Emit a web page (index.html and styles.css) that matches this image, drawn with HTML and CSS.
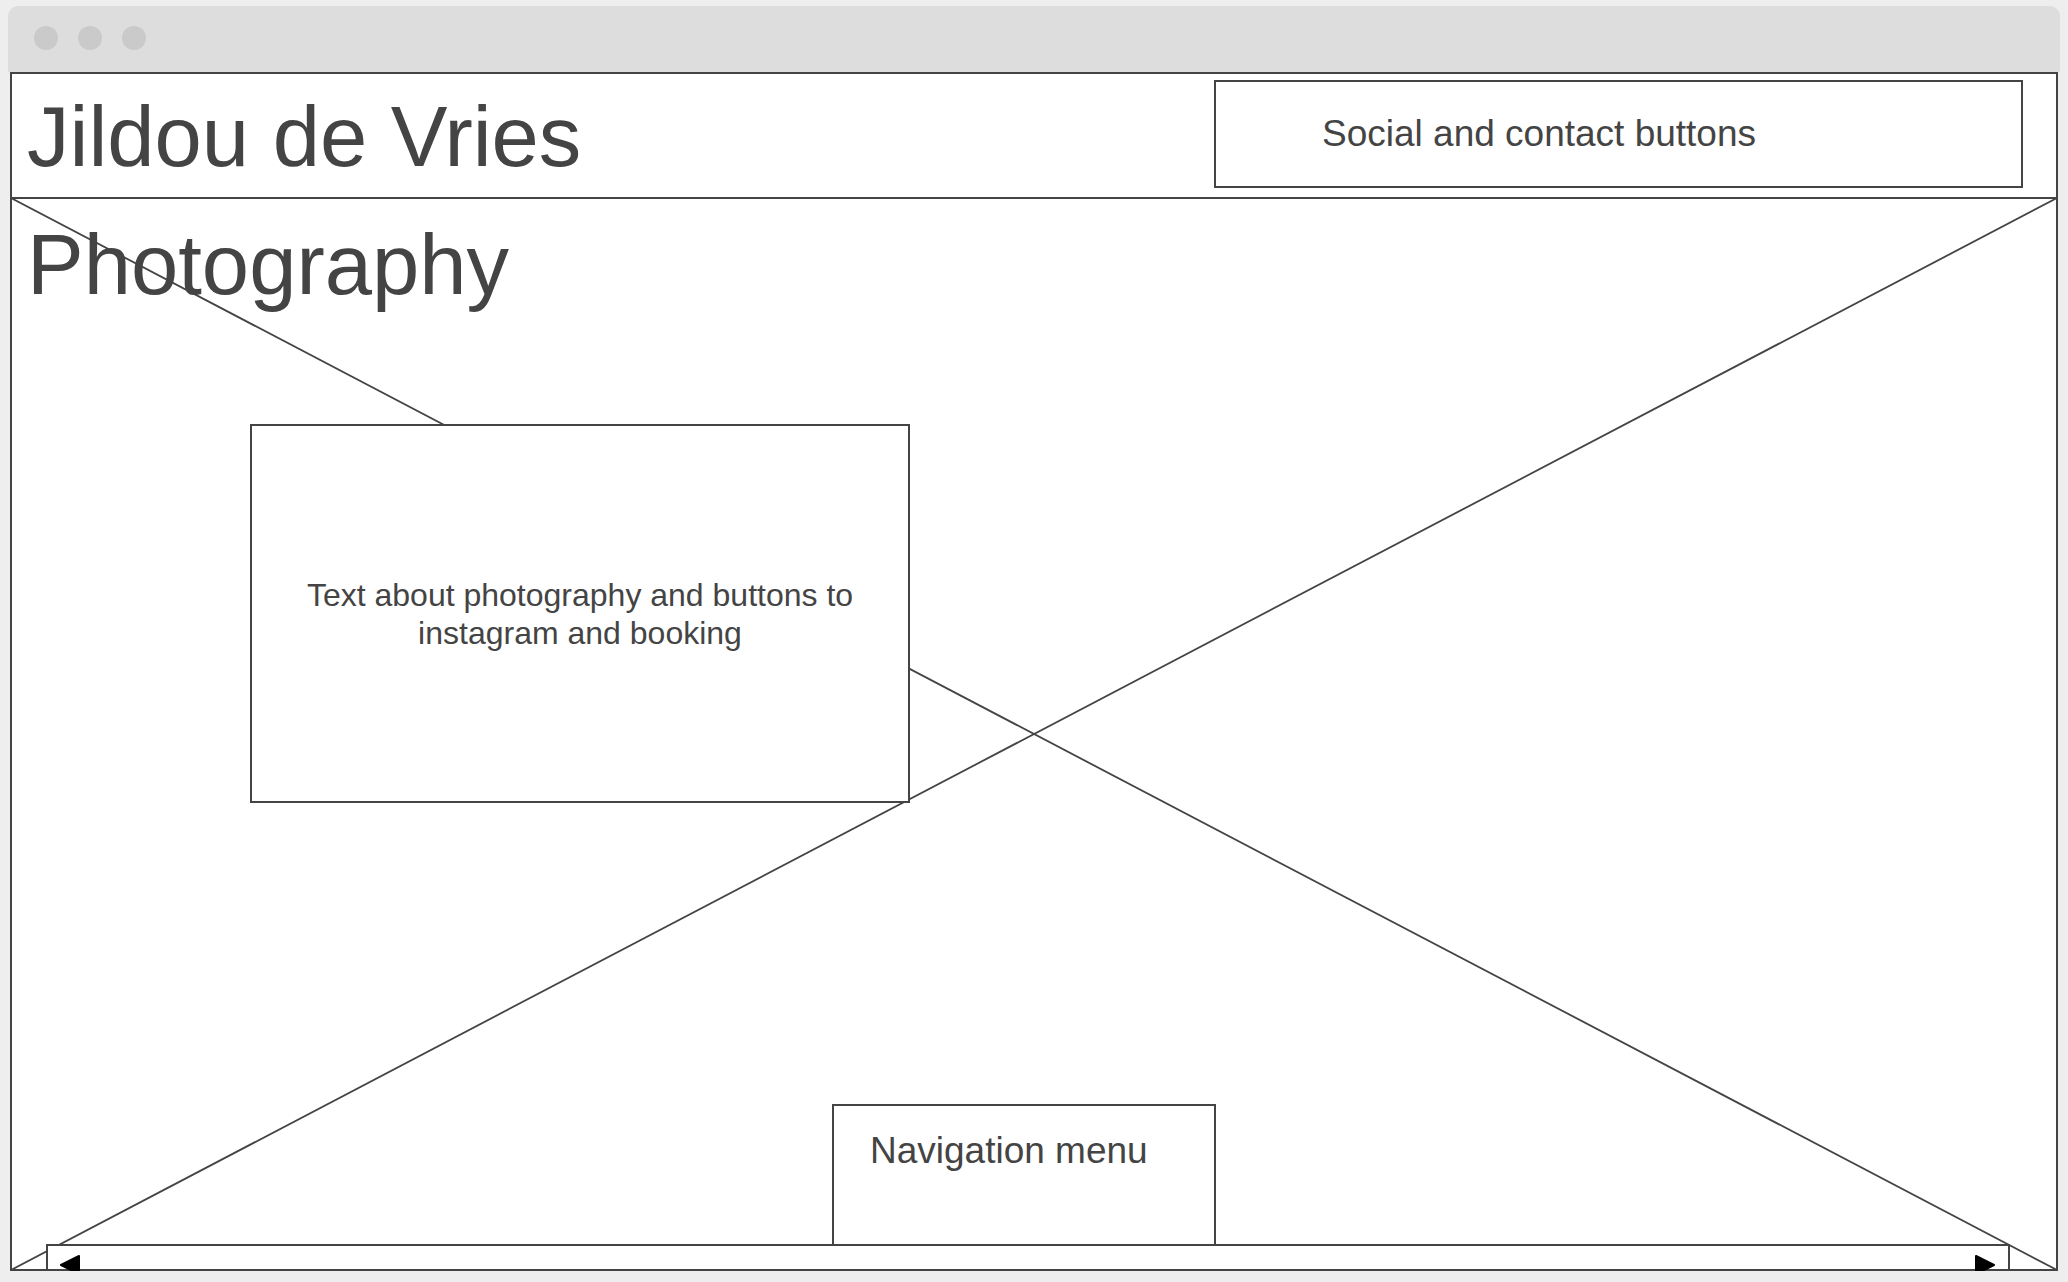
FILE: index.html
```html
<!DOCTYPE html>
<html lang="en">
  <head>
    <meta charset="UTF-8" />
    <meta name="viewport" content="width=device-width, initial-scale=1.0" />
    <title>Jildou de Vries - Wireframe</title>
    <link rel="stylesheet" href="styles.css">
  </head>
  <body>
    <div class="window">
      <div class="titlebar">
        <span class="dot"></span>
        <span class="dot"></span>
        <span class="dot"></span>
      </div>
      <div class="frame">
        <header class="header">
          <h1 class="name">Jildou de Vries</h1>
          <div class="social">Social and contact buttons</div>
        </header>
        <section class="hero">
          <!-- image placeholder cross -->
          <svg class="cross" viewBox="0 0 100 100" preserveAspectRatio="none">
            <line x1="0" y1="0" x2="100" y2="100" />
            <line x1="100" y1="0" x2="0" y2="100" />
          </svg>
          <h2 class="subtitle">Photography</h2>
          <div class="about">
            <p>Text about photography and buttons to<br />instagram and booking</p>
          </div>
          <nav class="nav">Navigation menu</nav>
          <div class="scrollbar">
            <svg class="arrow arrow-left" viewBox="0 0 22 20">
              <polygon points="20,1 2,10 20,19" />
            </svg>
            <svg class="arrow arrow-right" viewBox="0 0 22 20">
              <polygon points="2,1 20,10 2,19" />
            </svg>
          </div>
        </section>
      </div>
    </div>
  </body>
</html>
```

FILE: styles.css
```css
body {
  margin: 0;
  background-color: #eeeeee;
  font-family: "Liberation Sans", Arial, sans-serif;
  color: #444444;
}
.window {
  width: 2052px;
  margin: 6px 0 0 8px;
}
.titlebar {
  height: 66px;
  box-sizing: border-box;
  padding: 20px 0 0 26px;
  display: flex;
  gap: 20px;
  background-color: #dddddd;
  border-radius: 10px 10px 0 0;
}
.dot {
  width: 24px;
  height: 24px;
  border-radius: 50%;
  background-color: #cacaca;
}
.frame {
  margin: 0 2px;
  border: 2px solid #444444;
  background-color: white;
}
.header {
  height: 123px;
  display: flex;
  align-items: flex-start;
  border-bottom: 2px solid #444444;
}
.name {
  margin: 21px 0 0 15px;
  font-size: 85px;
  font-weight: normal;
  line-height: 84px;
}
.social {
  margin: 6px 33px 0 auto;
  width: 809px;
  height: 108px;
  box-sizing: border-box;
  padding-left: 106px;
  display: flex;
  align-items: center;
  border: 2px solid #444444;
  font-size: 37px;
  line-height: 42px;
}
.hero {
  position: relative;
  height: 1070px;
  display: flex;
  flex-direction: column;
  align-items: flex-start;
}
.cross {
  position: absolute;
  top: -1px;
  left: -1px;
  width: calc(100% + 2px);
  height: calc(100% + 2px);
}
.cross line {
  stroke: #444444;
  stroke-width: 1.8;
  vector-effect: non-scaling-stroke;
}
.subtitle {
  position: relative;
  margin: 24px 0 0 15px;
  font-size: 85px;
  font-weight: normal;
  line-height: 84px;
}
.about {
  position: relative;
  margin: 117px 0 0 238px;
  width: 660px;
  height: 379px;
  box-sizing: border-box;
  display: flex;
  align-items: center;
  justify-content: center;
  border: 2px solid #444444;
  background-color: white;
  text-align: center;
}
.about p {
  margin: 0;
  font-size: 32px;
  line-height: 38px;
}
.nav {
  position: relative;
  margin: auto 0 0 820px;
  width: 384px;
  height: 140px;
  box-sizing: border-box;
  padding: 24px 0 0 36px;
  border: 2px solid #444444;
  border-bottom: none;
  background-color: white;
  font-size: 37px;
  line-height: 42px;
}
.scrollbar {
  position: relative;
  align-self: stretch;
  margin: 0 46px 0 34px;
  height: 25px;
  box-sizing: border-box;
  border: 2px solid #444444;
  border-bottom: none;
  background-color: white;
}
.arrow {
  position: absolute;
  top: 9px;
  width: 22px;
  height: 20px;
}
.arrow polygon {
  fill: black;
  stroke: black;
  stroke-width: 2;
  stroke-linejoin: round;
}
.arrow-left {
  left: 11px;
}
.arrow-right {
  right: 12px;
}
```
